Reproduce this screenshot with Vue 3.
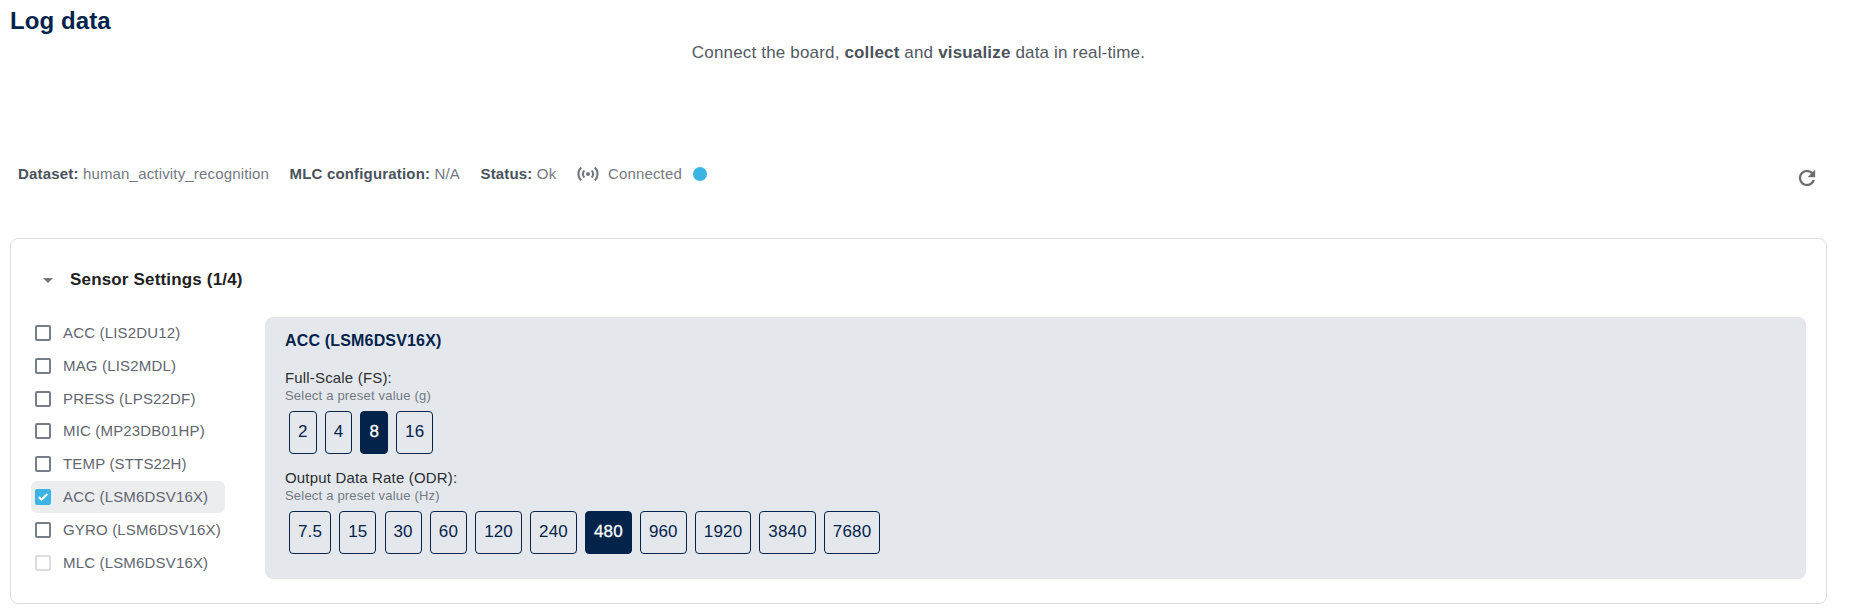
<script setup>
import { ref, computed } from 'vue'

const sensors = ref([
  { name: 'ACC (LIS2DU12)' },
  { name: 'MAG (LIS2MDL)' },
  { name: 'PRESS (LPS22DF)' },
  { name: 'MIC (MP23DB01HP)' },
  { name: 'TEMP (STTS22H)' },
  { name: 'ACC (LSM6DSV16X)', checked: true },
  { name: 'GYRO (LSM6DSV16X)' },
  { name: 'MLC (LSM6DSV16X)', disabled: true },
])
const active = computed(() => sensors.value.find((s) => s.checked))

const settings = ref([
  { label: 'Full-Scale (FS):', hint: 'Select a preset value (g)', value: '8', options: ['2', '4', '8', '16'] },
  {
    label: 'Output Data Rate (ODR):',
    hint: 'Select a preset value (Hz)',
    value: '480',
    options: ['7.5', '15', '30', '60', '120', '240', '480', '960', '1920', '3840', '7680'],
  },
])
</script>

<template>
  <main class="page">
    <h1>Log data</h1>
    <p class="intro">Connect the board, <b>collect</b> and <b>visualize</b> data in real-time.</p>

    <div class="status">
      <span class="item"><b>Dataset:</b> human_activity_recognition</span>
      <span class="item"><b>MLC configuration:</b> N/A</span>
      <span class="item"><b>Status:</b> Ok</span>
      <svg class="signal" width="22" height="16" viewBox="0 0 22 16" fill="none" stroke="#737982" stroke-width="2.1">
        <circle cx="11" cy="8" r="2.1" fill="#737982" stroke="none" />
        <path d="M7.4 4.4a5 5 0 0 0 0 7.2M14.6 4.4a5 5 0 0 1 0 7.2M4.2 1.6a8.8 8.8 0 0 0 0 12.8M17.8 1.6a8.8 8.8 0 0 1 0 12.8" />
      </svg>
      <span>Connected</span>
      <i class="dot"></i>
      <button class="refresh" aria-label="Refresh">
        <svg width="24" height="24" viewBox="0 0 24 24" fill="#6b6b6b" stroke="#6b6b6b" stroke-width="0.3">
          <path d="M17.65 6.35C16.2 4.9 14.21 4 12 4c-4.42 0-7.99 3.58-7.99 8s3.57 8 7.99 8c3.73 0 6.84-2.55 7.73-6h-2.08c-.82 2.33-3.04 4-5.65 4-3.31 0-6-2.69-6-6s2.69-6 6-6c1.66 0 3.14.69 4.22 1.78L13 11h7V4l-2.35 2.35z" />
        </svg>
      </button>
    </div>

    <section class="card">
      <header>
        <svg width="10" height="5" viewBox="0 0 10 5"><path d="M0 0h10L5 5z" fill="#757575" /></svg>
        <h2>Sensor Settings (1/4)</h2>
      </header>
      <div class="body">
        <ul class="sensors">
          <li v-for="s in sensors" :key="s.name" :class="{ active: s.checked, disabled: s.disabled }">
            <span class="box">
              <svg v-if="s.checked" width="16" height="16" viewBox="0 0 16 16" fill="none" stroke="#fff" stroke-width="2.1">
                <path d="M3.7 8.1l2.8 2.7 5.8-5.7" />
              </svg>
            </span>
            <span>{{ s.name }}</span>
          </li>
        </ul>
        <div class="panel">
          <h3>{{ active.name }}</h3>
          <div v-for="g in settings" :key="g.label" class="setting">
            <div class="label">{{ g.label }}</div>
            <div class="hint">{{ g.hint }}</div>
            <div class="options">
              <button v-for="o in g.options" :key="o" :class="{ on: o === g.value }" @click="g.value = o">{{ o }}</button>
            </div>
          </div>
        </div>
      </div>
    </section>
  </main>
</template>

<style>
body {
  background: #fff;
}
</style>

<style scoped>
* {
  box-sizing: border-box;
  margin: 0;
  padding: 0;
}
.page {
  width: 1827px;
  height: 614px;
  padding: 7px 0 0 10px;
  font: 15px/18px Arial, 'Liberation Sans', sans-serif;
  letter-spacing: 0.17px;
  color: #737982;
}
h1 {
  font-size: 24px;
  line-height: 28px;
  letter-spacing: 0.1px;
  color: #03234b;
}
.intro {
  margin-top: 8px;
  font-size: 17px;
  line-height: 20px;
  text-align: center;
  color: #525a63;
}
.intro b,
.status b {
  color: #4a525b;
}
.status {
  display: flex;
  align-items: center;
  height: 18px;
  margin-top: 102px;
  padding-left: 8px;
}
.item {
  margin-right: 20.5px;
}
.signal {
  margin: 0 9px 0 0;
}
.dot {
  width: 14px;
  height: 14px;
  margin-left: 11px;
  border-radius: 50%;
  background: #3cb4e6;
}
.refresh {
  display: flex;
  margin: 8px 8px 0 auto;
  border: 0;
  background: none;
}
.card {
  height: 366px;
  margin-top: 55px;
  padding: 0 20px;
  border: 1px solid #dcdee2;
  border-radius: 8px;
}
header {
  display: flex;
  align-items: center;
  height: 78px;
  padding: 4px 0 0 12px;
}
header svg {
  margin-right: 17px;
  margin-top: 1px;
}
h2 {
  font-size: 17px;
  line-height: 20px;
  color: #212121;
}
.body {
  display: flex;
  height: 262px;
  gap: 40px;
}
.sensors {
  width: 194px;
  list-style: none;
}
.sensors li {
  display: flex;
  align-items: center;
  height: 32px;
  margin-bottom: 0.8px;
  padding-left: 4px;
  border-radius: 6px;
  color: #5f666f;
  white-space: nowrap;
}
.sensors .active {
  background: #ecedef;
}
.box {
  display: block;
  width: 16px;
  height: 16px;
  margin-right: 12px;
  border: 2px solid #777e89;
  border-radius: 2px;
}
.active .box {
  border: 0;
  background: #3cb4e6;
}
.active svg {
  display: block;
}
.disabled .box {
  border-color: #dddddd;
}
.panel {
  flex: 1;
  padding: 14px 20px;
  border-radius: 8px;
  background: #e4e8ed;
}
h3 {
  margin-bottom: 18px;
  font-size: 16px;
  line-height: 19px;
  color: #03234b;
}
.setting {
  height: 100px;
}
.label {
  color: #2b2d30;
  line-height: 20px;
}
.hint {
  font-size: 13px;
  line-height: 16px;
  letter-spacing: 0.2px;
}
.options {
  display: flex;
  gap: 8.1px;
  margin: 7px 0 0 4px;
}
.options button {
  height: 42.5px;
  padding: 0 8px 1px;
  border: 1px solid #03234b;
  border-radius: 4px;
  background: none;
  color: #03234b;
  font: 17px/20px Arial, 'Liberation Sans', sans-serif;
  letter-spacing: 0.15px;
}
.options .on {
  background: #03234b;
  color: #fff;
  -webkit-text-stroke: 0.3px #fff;
}
</style>
